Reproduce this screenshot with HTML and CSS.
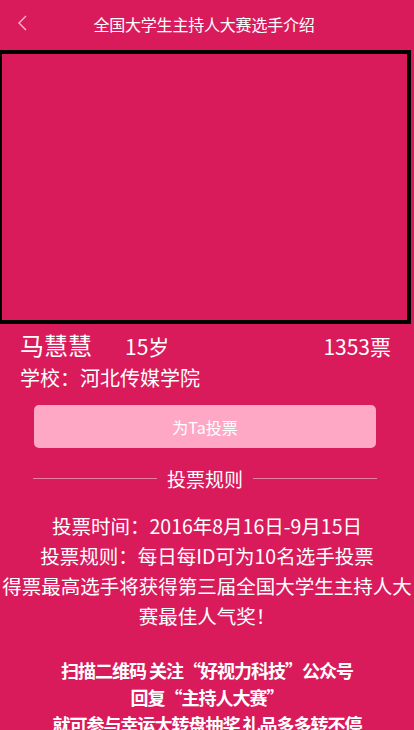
FILE: index.html
```html
<!DOCTYPE html>
<html lang="zh">
<head>
<meta charset="utf-8">
<link rel="stylesheet" href="styles.css">
</head>
<body>
<div class="page">
  <header class="topbar">
    <svg class="back" width="12" height="18" viewBox="0 0 12 18"><path d="M9 2 L2 9 L9 16" fill="none" stroke="#f6b6cc" stroke-width="1.4"/></svg>
    <h1 class="title">全国大学生主持人大赛选手介绍</h1>
  </header>
  <div class="photo"></div>
  <div class="info">
    <div class="name-row">
      <span class="name">马慧慧</span>
      <span class="age">15岁</span>
      <span class="votes">1353票</span>
    </div>
    <div class="school">学校：河北传媒学院</div>
  </div>
  <div class="btn-wrap"><button class="vote-btn">为Ta投票</button></div>
  <div class="rules-head"><span class="line"></span><span class="rules-title">投票规则</span><span class="line"></span></div>
  <div class="rules">
    <p>投票时间：2016年8月16日-9月15日</p>
    <p>投票规则：每日每ID可为10名选手投票</p>
    <p>得票最高选手将获得第三届全国大学生主持人大赛最佳人气奖！</p>
  </div>
  <div class="promo">
    <p>扫描二维码 关注“好视力科技”公众号</p>
    <p>回复“主持人大赛”</p>
    <p>就可参与幸运大转盘抽奖 礼品多多转不停</p>
  </div>
</div>
</body>
</html>
```
FILE: styles.css
```css
html, body { margin: 0; padding: 0; }
body {
  background: #d91b5c;
  color: #fff;
  font-family: "Noto Sans CJK SC", "Noto Sans", sans-serif;
  width: 414px;
  height: 730px;
  overflow: hidden;
}
.page { display: flex; flex-direction: column; }
.topbar {
  height: 50px;
  display: flex;
  align-items: center;
  justify-content: center;
  position: relative;
}
.back { position: absolute; left: 17px; top: 14px; }
.title { margin: 0 0 2px -6px; font-size: 16px; font-weight: normal; letter-spacing: -0.2px; }
.photo {
  height: 266px;
  border: 4px solid #000;
  border-left-width: 2px;
  margin-right: 3px;
  background: #d91b5c;
}
.info { padding: 3px 20px 0 20px; }
.name-row { display: flex; align-items: baseline; height: 36px; }
.name { font-size: 24px; line-height: 36px; }
.age { font-size: 21px; margin-left: 33px; }
.votes { font-size: 21px; margin-left: auto; margin-right: 3px; }
.school { font-size: 20px; line-height: 30px; }
.btn-wrap { padding: 12px 38px 0 34px; }
.vote-btn {
  width: 100%;
  height: 43px;
  border: 0;
  border-radius: 5px;
  background: #ffa8c6;
  color: #fff;
  font-family: inherit;
  font-size: 16px;
}
.rules-head {
  display: flex;
  align-items: center;
  padding: 17px 37px 0 33px;
  gap: 10px;
}
.rules-head .line { flex: 1; height: 1px; background: #e87fa3; }
.rules-title { font-size: 19px; }
.rules {
  margin-top: 19px;
  text-align: center;
  font-size: 19.5px;
  line-height: 30px;
}
.rules p { margin: 0; }
.promo {
  margin-top: 26px;
  text-align: center;
  font-size: 18px;
  font-weight: bold;
  line-height: 27px;
  letter-spacing: -1px;
}
.promo p { margin: 0; }
```
